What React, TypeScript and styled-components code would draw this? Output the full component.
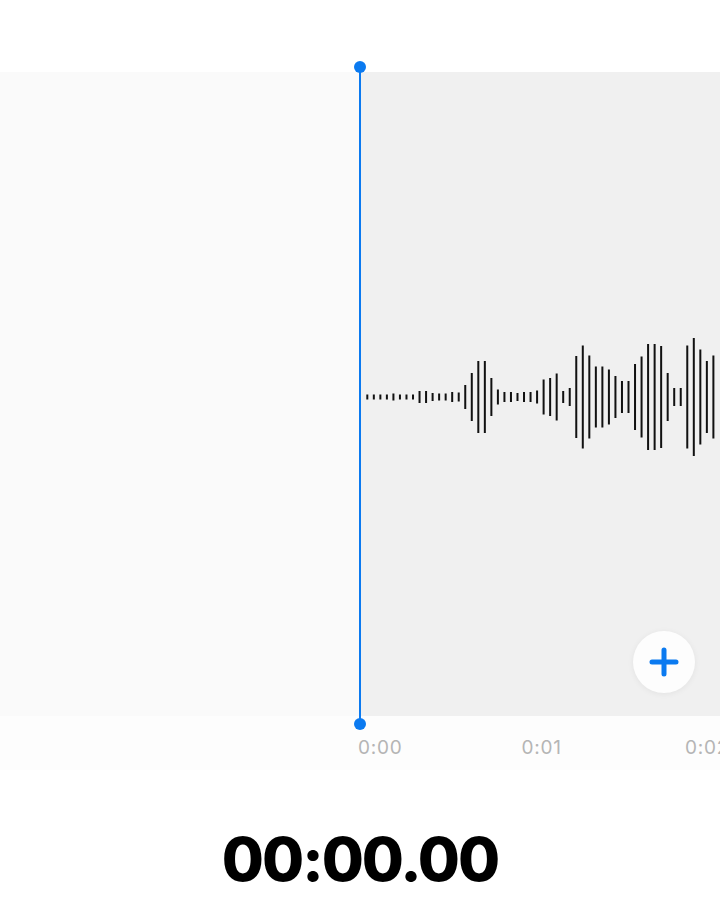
import { FC } from "react";
import styled, { createGlobalStyle } from "styled-components";

const GlobalStyle = createGlobalStyle`
  html, body {
    margin: 0;
    padding: 0;
    background: #ffffff;
  }
  body {
    font-family: "Inter", "Liberation Sans", sans-serif;
  }
`;

const BLUE = "#0b7af0";

const Page = styled.div({
  width: 720,
  height: 902,
  overflow: "hidden",
  position: "relative",
  display: "flex",
  flexDirection: "column",
  background: "#ffffff",
});

const TopGap = styled.div({
  height: 72,
  flexShrink: 0,
});

const Editor = styled.div({
  display: "grid",
  gridTemplateColumns: "360px 360px",
  height: 644,
  flexShrink: 0,
});

const Pane = styled.div<{ $active?: boolean }>(({ $active }) => ({
  position: "relative",
  background: $active ? "#f0f0f0" : "#fafafa",
  display: "flex",
  alignItems: "center",
  overflow: "hidden",
}));

const Wave = styled.svg({
  display: "block",
  marginTop: 6,
});

const AddButton = styled.button({
  position: "absolute",
  right: 25,
  bottom: 23,
  width: 62,
  height: 62,
  borderRadius: "50%",
  border: "none",
  background: "#fdfdfd",
  boxShadow: "0 1px 6px rgba(0,0,0,0.06)",
  display: "flex",
  alignItems: "center",
  justifyContent: "center",
  padding: 0,
  cursor: "pointer",
});

const Timeline = styled.div({
  height: 54,
  flexShrink: 0,
  display: "flex",
  background: "#fdfdfd",
  paddingLeft: 358,
});

const Tick = styled.span({
  width: 163.5,
  flexShrink: 0,
  paddingTop: 21,
  fontSize: 19,
  lineHeight: "22px",
  fontFamily: '"Inter", "Liberation Sans", sans-serif',
  color: "#b5b5b5",
  letterSpacing: 0.8,
  whiteSpace: "nowrap",
});

const TimerRow = styled.div({
  flex: 1,
  display: "flex",
  justifyContent: "center",
  paddingTop: 54,
});

const Timer = styled.div({
  fontFamily: '"Inter", "Liberation Sans", sans-serif',
  fontWeight: 800,
  fontSize: 61,
  lineHeight: "70px",
  color: "#000000",
  letterSpacing: -2,
});

const Playhead = styled.div({
  position: "absolute",
  left: 359,
  top: 67,
  width: 2,
  height: 657,
  background: BLUE,
  "&::before, &::after": {
    content: '""',
    position: "absolute",
    left: -5,
    width: 12,
    height: 12,
    borderRadius: "50%",
    background: BLUE,
  },
  "&::before": { top: -6 },
  "&::after": { bottom: -6 },
});

const bars = [
  5, 5, 5, 5, 7, 5, 5, 5, 12, 12, 8, 7, 7, 10, 9, 24, 48, 72, 72, 38, 15, 10,
  10, 8, 10, 10, 13, 35, 38, 47, 12, 18, 82, 103, 83, 61, 61, 55, 42, 32, 32,
  66, 81, 106, 106, 102, 48, 18, 18, 103, 118, 95, 72, 83,
];

const Waveform: FC = () => (
  <Wave width={360} height={130} viewBox="0 0 360 130">
    {bars.map((h, i) => (
      <rect
        key={i}
        x={6.3 + i * 6.53}
        y={65 - h / 2}
        width={2}
        height={h}
        fill="#111111"
      />
    ))}
  </Wave>
);

const PlusIcon: FC = () => (
  <svg width={32} height={32} viewBox="0 0 32 32">
    <path
      d="M16 4 V28 M4 16 H28"
      stroke={BLUE}
      strokeWidth={5}
      strokeLinecap="round"
    />
  </svg>
);

const App: FC = () => (
  <Page>
    <GlobalStyle />
    <TopGap />
    <Editor>
      <Pane />
      <Pane $active>
        <Waveform />
        <AddButton aria-label="Add">
          <PlusIcon />
        </AddButton>
      </Pane>
    </Editor>
    <Timeline>
      <Tick>0:00</Tick>
      <Tick>0:01</Tick>
      <Tick>0:02</Tick>
    </Timeline>
    <TimerRow>
      <Timer>00:00.00</Timer>
    </TimerRow>
    <Playhead />
  </Page>
);

export default App;
